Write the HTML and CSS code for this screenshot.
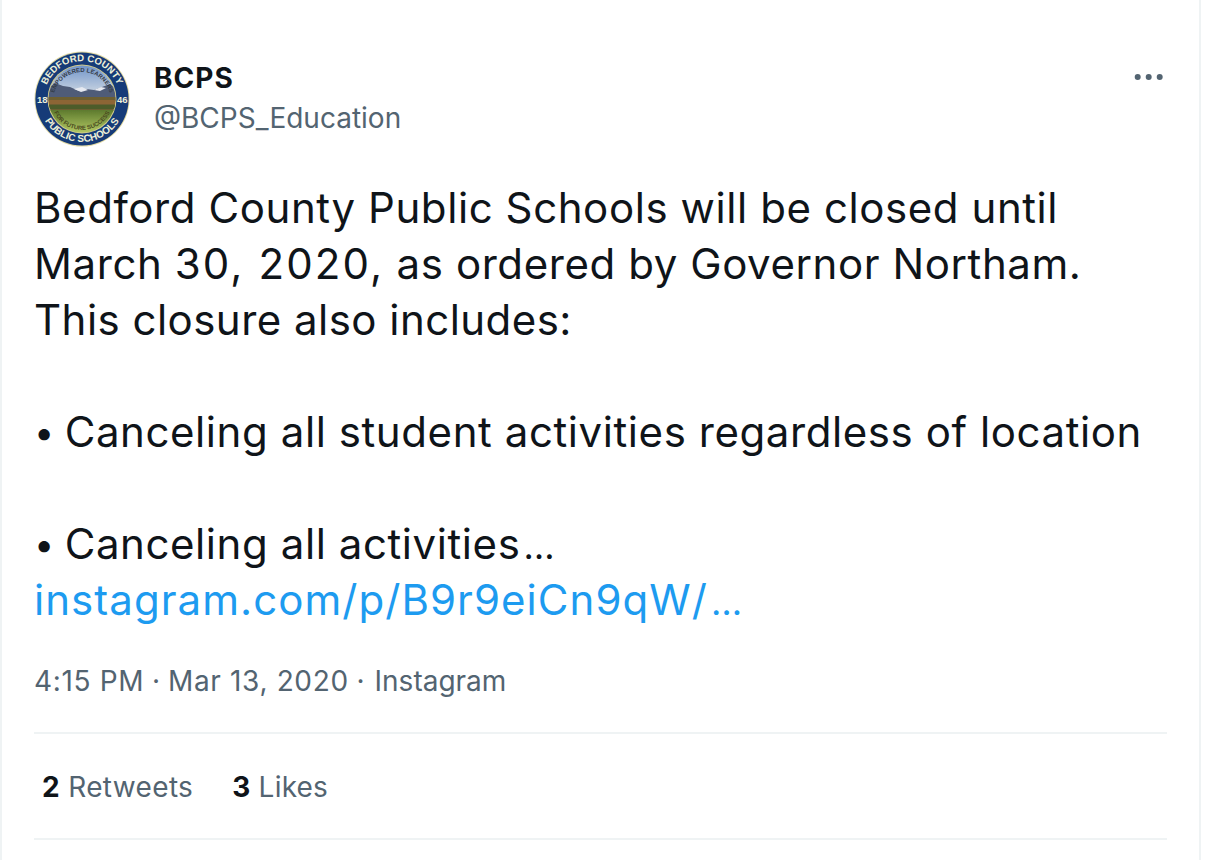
FILE: index.html
```html
<!DOCTYPE html>
<html lang="en">
<head>
<meta charset="utf-8">
<title>BCPS Tweet</title>
<link rel="stylesheet" href="styles.css">
</head>
<body>
<main class="tweet">
  <header class="head">
    <svg class="avatar" viewBox="0 0 96 96" width="96" height="96" aria-label="Bedford County Public Schools seal">
      <defs>
        <path id="arcTop" d="M10 48a38 38 0 0 1 76 0"/>
        <path id="arcBot" d="M5 48a43 43 0 0 0 86 0"/>
        <path id="arcIn1" d="M19 50a29 29 0 0 1 58 0"/>
        <path id="arcIn2" d="M17 48a31 31 0 0 0 62 0"/>
        <clipPath id="inner"><circle cx="48" cy="48" r="33.5"/></clipPath>
        <linearGradient id="sky" x1="0" y1="0" x2="0" y2="1">
          <stop offset="0" stop-color="#6f93c8"/>
          <stop offset="1" stop-color="#c3d0e0"/>
        </linearGradient>
        <linearGradient id="lawn" x1="0" y1="0" x2="0" y2="1">
          <stop offset="0" stop-color="#5d7a2e"/>
          <stop offset="1" stop-color="#b7cc66"/>
        </linearGradient>
        <filter id="soft" x="-5%" y="-5%" width="110%" height="110%"><feGaussianBlur stdDeviation="0.45"/></filter>
      </defs>
      <g filter="url(#soft)">
        <circle cx="48" cy="48" r="47.5" fill="#e2d9a0"/>
        <circle cx="48" cy="48" r="46.6" fill="#143a78"/>
        <circle cx="48" cy="48" r="34.5" fill="#cfc98a"/>
        <g clip-path="url(#inner)">
          <rect x="14" y="14" width="68" height="26" fill="url(#sky)"/>
          <path d="M14 37l7-5 8 3 7 1 9 4 7-2 8 1 8-3 8-3 6 5v12H14z" fill="#4f5b78"/>
          <path d="M40 38l8-2 6 3-7 2zM60 39l7-3 5 1-6 3z" fill="#e6e9f0"/>
          <rect x="14" y="46" width="68" height="14" fill="#6d5f30"/>
          <rect x="14" y="49" width="68" height="4" fill="#8d6534"/>
          <rect x="14" y="54" width="68" height="4" fill="#4d5c2a"/>
          <rect x="14" y="59" width="68" height="24" fill="url(#lawn)"/>
        </g>
      </g>
      <text class="seal big"><textPath href="#arcTop" startOffset="50%">BEDFORD COUNTY</textPath></text>
      <text class="seal big lowerarc"><textPath href="#arcBot" startOffset="50%">PUBLIC SCHOOLS</textPath></text>
      <text class="seal num" x="3" y="52">18</text>
      <text class="seal num" x="83" y="52">46</text>
      <text class="seal tiny"><textPath href="#arcIn1" startOffset="50%">EMPOWERED LEARNERS</textPath></text>
      <text class="seal tiny lower"><textPath href="#arcIn2" startOffset="50%">FOR FUTURE SUCCESS</textPath></text>
    </svg>
    <div class="names">
      <div class="name">BCPS</div>
      <div class="handle">@BCPS_Education</div>
    </div>
    <svg class="more" viewBox="0 0 30 8" width="30" height="8" aria-label="More">
      <circle cx="3.7" cy="4" r="3"/><circle cx="14.7" cy="4" r="3"/><circle cx="25.7" cy="4" r="3"/>
    </svg>
  </header>
  <p class="body">Bedford County Public Schools will be closed until<br>March <span class="digits">30, 2020,</span> as ordered by Governor Northam.<br><span class="tight">This closure also includes:</span><br><br><span class="bullet">•</span> Canceling all student activities regardless of location<br><br><span class="bullet">•</span> Canceling all activities<span class="ell">…</span><br><a class="link" href="#">instagram.com/p/B9r9eiCn9qW/<span class="ell">…</span></a></p>
  <div class="meta"><span class="time">4:15 PM</span> · <span class="time">Mar 13, 2020</span> · <span class="source">Instagram</span></div>
  <div class="stats">
    <span class="stat retweets"><b>2</b> Retweets</span>
    <span class="stat likes"><b>3</b> Likes</span>
  </div>
</main>
</body>
</html>
```
FILE: styles.css
```css
* { box-sizing: border-box; }
html, body { margin: 0; padding: 0; background: #fff; }
body { height: 860px; overflow: hidden; font-family: Inter, "Liberation Sans", sans-serif; color: #0f1419; }
.tweet { width: 1201px; height: 860px; border-left: 2px solid #eff3f4; border-right: 2px solid #eff3f4; padding: 50px 32px 0 32px; }
.head { display: flex; align-items: flex-start; height: 100px; }
.avatar { display: block; flex: none; margin-top: 1px; }
.names { margin-left: 24px; flex: 1; padding-top: 12px; }
.name { font-size: 28px; line-height: 32px; font-weight: 700; letter-spacing: 1px; }
.handle { font-size: 28px; line-height: 40px; color: #536471; margin-top: 4px; }
.more { fill: #536471; margin-top: 23px; margin-right: 3px; flex: none; }
.seal { fill: #eef0d8; font-family: "Liberation Sans", sans-serif; font-weight: 700; text-anchor: middle; }
.big { font-size: 9.6px; }
.lowerarc { font-size: 10px; }
.num { font-size: 9.5px; text-anchor: start; }
.tiny { font-size: 6px; fill: #343c48; }
.lower { fill: #4a4a20; }
.body { margin: 30px 0 0; font-size: 42px; line-height: 56px; letter-spacing: .58px; }
.digits { letter-spacing: 2.1px; }
.tight { letter-spacing: .47px; }
.bullet { font-size: 36px; line-height: 0; letter-spacing: 0; vertical-align: 2px; margin-right: -2px; }
.ell { font-size: 36px; line-height: 0; letter-spacing: 0; margin-left: 3px; }
.link { color: #1d9bf0; text-decoration: none; letter-spacing: 1.05px; }
.meta { margin-top: 33px; font-size: 28px; line-height: 40px; color: #536471; }
.time { letter-spacing: .65px; }
.source { margin-left: 2px; }
.stats { margin-top: 31px; height: 108px; border-top: 2px solid #eff3f4; border-bottom: 2px solid #eff3f4; display: flex; align-items: center; gap: 40px; padding: 2px 0 0 8px; font-size: 28px; color: #536471; }
.stat b { color: #0f1419; font-weight: 700; }
.retweets { letter-spacing: .35px; }
.likes { letter-spacing: .2px; margin-left: -1px; }
```
